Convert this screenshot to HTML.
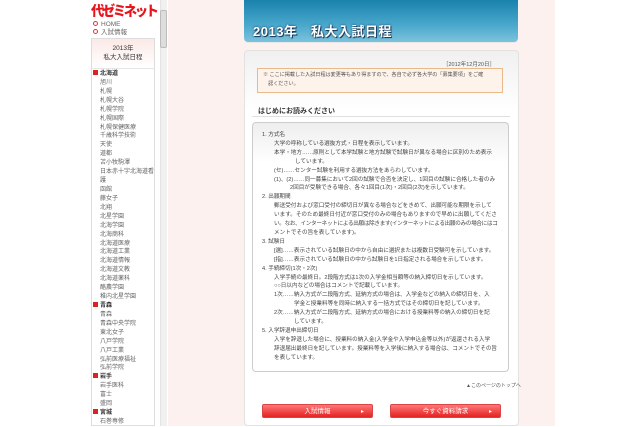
<!DOCTYPE html>
<html><head><meta charset="utf-8"><style>
*{margin:0;padding:0;box-sizing:border-box}
body{width:640px;height:426px;overflow:hidden;background:#fff;position:relative;font-family:"Liberation Sans","Noto Sans CJK JP",sans-serif;color:#444}
.a{position:absolute}
.pink{left:168px;top:0;width:387px;height:426px;background:#fcf1ef}
.logo{left:91px;top:1px;font-size:14px;font-weight:900;color:#e8161c;letter-spacing:-2.5px;white-space:nowrap;transform:scaleX(.95);transform-origin:left}
.nav{left:93px;font-size:6.5px;color:#666;line-height:8px}
.nav b{display:inline-block;width:5px;height:5px;border-radius:50%;border:1.5px solid #e33;margin-right:3px;vertical-align:0}
.sbox{left:91px;top:38px;width:64px;height:30px;border:1px solid #ddd;border-bottom:none;background:linear-gradient(#fbe9e6,#fff);font-size:6.5px;text-align:center;line-height:9px;padding-top:5px;color:#333}
.list{left:91px;top:68px;width:64px;height:358px;border:1px solid #ddd;border-top:1px solid #e6e6e6;background:#fff;padding-top:1px}
.list div{font-size:6px;line-height:8.92px;padding-left:8px;color:#666;white-space:nowrap}
.list div.h{padding-left:1px;color:#333;font-weight:bold}
.list div.h:before{content:"";display:inline-block;width:5px;height:5px;background:#d22;margin-right:2px;vertical-align:0}
.sc{left:160px;top:0;width:7px;height:426px;background:#f0f0f0;border-left:1px solid #e4e4e4}
.th{left:160px;top:10px;width:7px;height:38px;background:#ddd;border:1px solid #bbb;border-radius:2px}
.hdr{left:244px;top:0;width:274px;height:42px;background:linear-gradient(#1a82ad,#4aa8cc 60%,#7cc3dc);border-radius:0 0 4px 4px;box-shadow:0 1px 0 #e8e8e8}
.hdr span{position:absolute;left:9px;top:21px;font-size:13px;font-weight:bold;color:#fff;text-shadow:0 0 2px #135,1px 1px 0 #246;letter-spacing:.5px}
.main{left:244px;top:50px;width:275px;height:376px;background:linear-gradient(#f0f0f0,#fff 60px);border:1px solid #e2e2e2;border-radius:4px}
.date{left:443px;top:60px;font-size:5.5px;color:#555}
.note{left:257px;top:68px;width:246px;height:25px;background:#fdf3ea;border:1px solid #eab98a;font-size:5.1px;line-height:9px;padding:2px 3px 0 5px;color:#555;white-space:nowrap}
.h2{left:258px;top:106px;font-size:7px;font-weight:bold;color:#333}
.hr{left:252px;top:116px;width:258px;height:1px;background:#e0e0e0}
.box{left:252px;top:122px;width:257px;height:250px;border:1px solid #ccc;border-radius:4px;background:linear-gradient(#eee,#fff 40px)}
.t{left:262px;top:131px;width:245px;font-size:5.6px;line-height:8.9px;color:#444}
.t p{white-space:nowrap}
.i1{padding-left:12px}
.top{left:466px;top:382px;font-size:5px;color:#555}
.btn{top:404px;height:14px;border-radius:2px;background:linear-gradient(#f77,#e42222);color:#fff;font-size:6.5px;text-align:center;line-height:14px;border:1px solid #d44}
.btn:after{content:"▸";position:absolute;right:8px;font-size:6px}
</style></head><body>
<div class="a pink"></div>
<div class="a logo">代ゼミネット</div>
<div class="a nav" style="top:21px"><b></b>HOME</div>
<div class="a nav" style="top:29px"><b></b>入試情報</div>
<div class="a sbox">2013年<br>私大入試日程</div>
<div class="a list">
<div class="h">北海道</div><div>旭川</div><div>札幌</div><div>札幌大谷</div><div>札幌学院</div><div>札幌国際</div><div>札幌保健医療</div><div>千歳科学技術</div><div>天使</div><div>道都</div><div>苫小牧駒澤</div><div>日本赤十字北海道看</div><div>護</div><div>函館</div><div>藤女子</div><div>北翔</div><div>北星学園</div><div>北海学園</div><div>北海商科</div><div>北海道医療</div><div>北海道工業</div><div>北海道情報</div><div>北海道文教</div><div>北海道薬科</div><div>酪農学園</div><div>稚内北星学園</div><div class="h">青森</div><div>青森</div><div>青森中央学院</div><div>東北女子</div><div>八戸学院</div><div>八戸工業</div><div>弘前医療福祉</div><div>弘前学院</div><div class="h">岩手</div><div>岩手医科</div><div>富士</div><div>盛岡</div><div class="h">宮城</div><div>石巻専修</div>
</div>
<div class="a sc"></div><div class="a th"></div>
<div class="a hdr"><span>2013年　私大入試日程</span></div>
<div class="a main"></div>
<div class="a date">［2012年12月20日］</div>
<div class="a note">※ ここに掲載した入試日程は変更等もあり得ますので、各自で必ず各大学の「募集要項」をご確<br>　認ください。</div>
<div class="a h2">はじめにお読みください</div>
<div class="a hr"></div>
<div class="a box"></div>
<div class="a t">
<p>1. 方式名</p>
<p class="i1">大学の呼称している選抜方式・日程を表示しています。</p>
<p class="i1">本学・地方……原則として本学試験と地方試験で試験日が異なる場合に区別のため表示</p>
<p style="padding-left:33px">しています。</p>
<p class="i1">(セ)……センター試験を利用する選抜方法をあらわしています。</p>
<p class="i1">(1)、(2)……同一募集において2回の試験で合否を決定し、1回目の試験に合格した者のみ</p>
<p style="padding-left:28px">2回目が受験できる場合、各々1回目(1次)・2回目(2次)を示しています。</p>
<p>2. 出願期間</p>
<p class="i1">郵送受付および窓口受付の締切日が異なる場合などをきめて、出願可能な期限を示して</p>
<p class="i1">います。そのため最終日付近が窓口受付のみの場合もありますので早めに出願してくださ</p>
<p class="i1" style="letter-spacing:-.3px">い。なお、インターネットによる出願は除きます(インターネットによる出願のみの場合にはコ</p>
<p class="i1">メントでその旨を表しています)。</p>
<p>3. 試験日</p>
<p class="i1">[選]……表示されている試験日の中から自由に選択または複数日受験可を示しています。</p>
<p class="i1">[指]……表示されている試験日の中から試験日を1日指定される場合を示しています。</p>
<p>4. 手続締切(1次・2次)</p>
<p class="i1">入学手続の最終日。2段階方式は1次の入学金相当額等の納入締切日を示しています。</p>
<p class="i1">○○日以内などの場合はコメントで記載しています。</p>
<p class="i1">1次……納入方式が二段階方式、延納方式の場合は、入学金などの納入の締切日を、入</p>
<p style="padding-left:32px">学金と授業料等を同時に納入する一括方式ではその締切日を記しています。</p>
<p class="i1">2次……納入方式が二段階方式、延納方式の場合における授業料等の納入の締切日を記</p>
<p style="padding-left:32px">しています。</p>
<p>5. 入学辞退申出締切日</p>
<p class="i1">入学を辞退した場合に、授業料の納入金(入学金や入学申込金等以外)が返還される入学</p>
<p class="i1">辞退届出最終日を記しています。授業料等を入学後に納入する場合は、コメントでその旨</p>
<p class="i1">を表しています。</p>
</div>
<div class="a top">▲このページのトップへ</div>
<div class="a btn" style="left:262px;width:111px">入試情報</div>
<div class="a btn" style="left:390px;width:111px">今すぐ資料請求</div>
</body></html>
